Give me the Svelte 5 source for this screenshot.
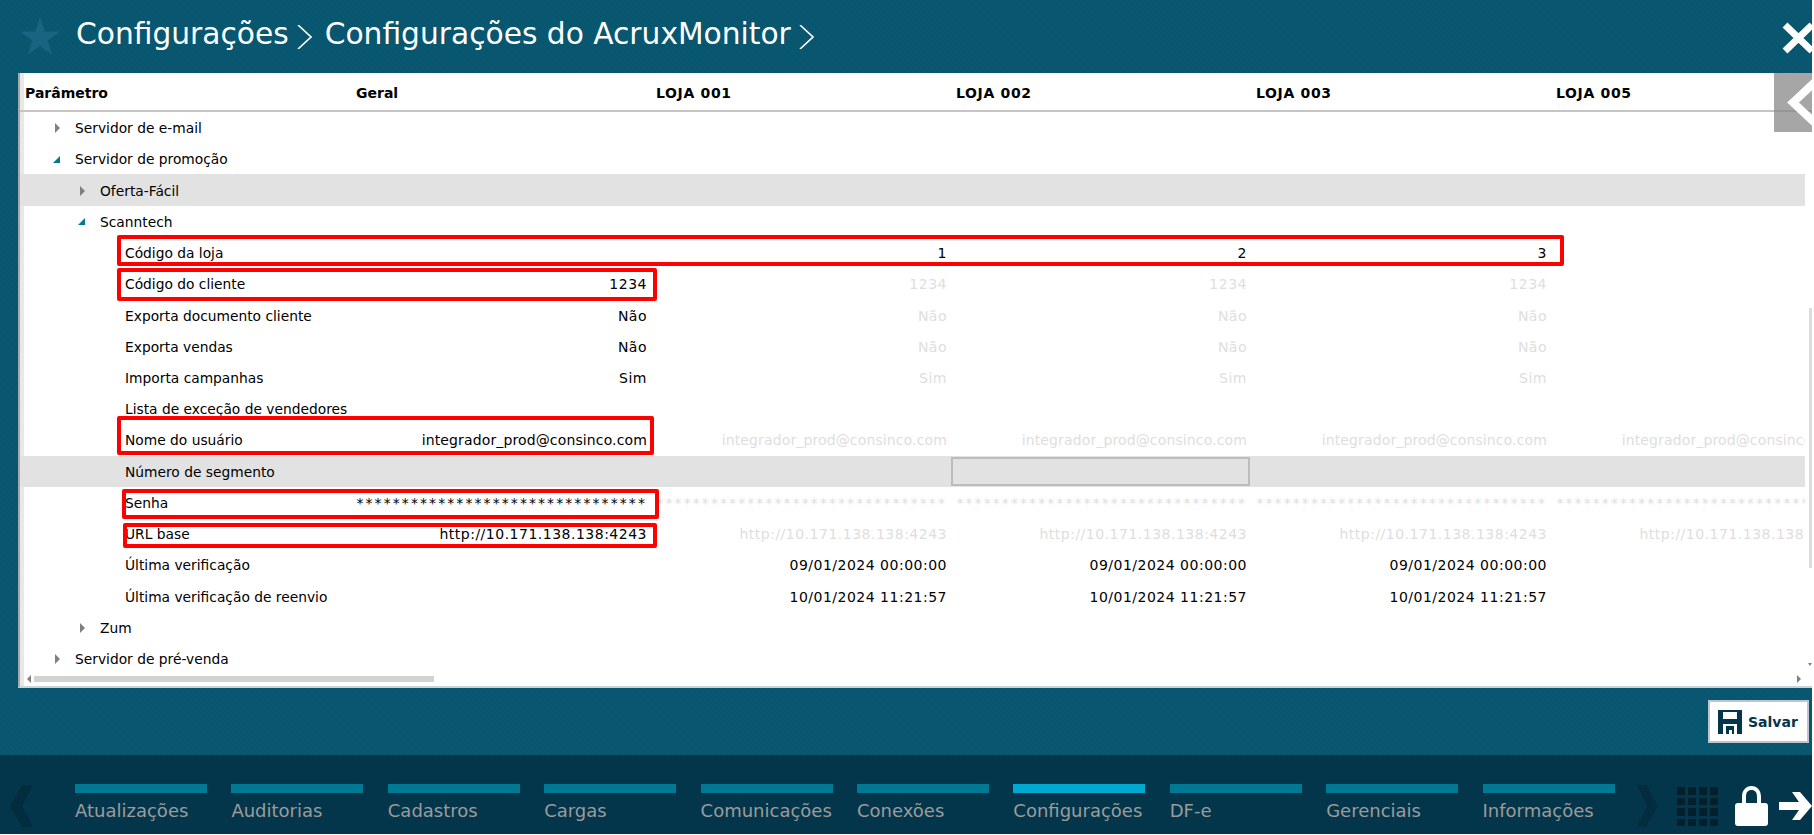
<script lang="ts">
	type Row = {
		label: string;
		level: number;
		arrow?: 'closed' | 'open';
		shaded?: boolean;
		values?: string[];
		inherited?: boolean;
		kind?: string;
	};

	const stars = '*'.repeat(32);
	const fill = (geral: string) => [geral, geral, geral, geral, geral];

	const columns = ['Geral', 'LOJA 001', 'LOJA 002', 'LOJA 003', 'LOJA 005'];

	const rows: Row[] = [
		{ label: 'Servidor de e-mail', level: 0, arrow: 'closed' },
		{ label: 'Servidor de promoção', level: 0, arrow: 'open' },
		{ label: 'Oferta-Fácil', level: 1, arrow: 'closed', shaded: true },
		{ label: 'Scanntech', level: 1, arrow: 'open' },
		{ label: 'Código da loja', level: 2, values: ['', '1', '2', '3', ''], kind: 'num' },
		{ label: 'Código do cliente', level: 2, values: ['1234', '1234', '1234', '1234', ''], inherited: true, kind: 'num' },
		{ label: 'Exporta documento cliente', level: 2, values: ['Não', 'Não', 'Não', 'Não', ''], inherited: true, kind: 'num' },
		{ label: 'Exporta vendas', level: 2, values: ['Não', 'Não', 'Não', 'Não', ''], inherited: true, kind: 'num' },
		{ label: 'Importa campanhas', level: 2, values: ['Sim', 'Sim', 'Sim', 'Sim', ''], inherited: true, kind: 'num' },
		{ label: 'Lista de exceção de vendedores', level: 2 },
		{ label: 'Nome do usuário', level: 2, values: fill('integrador_prod@consinco.com'), inherited: true, kind: 'mail' },
		{ label: 'Número de segmento', level: 2, shaded: true },
		{ label: 'Senha', level: 2, values: fill(stars), inherited: true, kind: 'stars' },
		{ label: 'URL base', level: 2, values: fill('http://10.171.138.138:4243'), inherited: true, kind: 'num' },
		{ label: 'Última verificação', level: 2, values: ['', '09/01/2024 00:00:00', '09/01/2024 00:00:00', '09/01/2024 00:00:00', ''], kind: 'num' },
		{ label: 'Última verificação de reenvio', level: 2, values: ['', '10/01/2024 11:21:57', '10/01/2024 11:21:57', '10/01/2024 11:21:57', ''], kind: 'num' },
		{ label: 'Zum', level: 1, arrow: 'closed' },
		{ label: 'Servidor de pré-venda', level: 0, arrow: 'closed' }
	];

	const tabs = [
		'Atualizações',
		'Auditorias',
		'Cadastros',
		'Cargas',
		'Comunicações',
		'Conexões',
		'Configurações',
		'DF-e',
		'Gerenciais',
		'Informações'
	];
</script>

<div class="page">
	<header class="top">
		<svg class="star" viewBox="0 0 40 38" aria-hidden="true">
			<path d="M20 0 24.700 14.500 40 14.500 27.600 23.500 32.400 38 20 29 7.600 38 12.400 23.500 0 14.500 15.300 14.500Z" />
		</svg>
		<h1>Configurações</h1>
		<svg class="crumb" viewBox="0 0 15 24" aria-hidden="true"><path d="M1 0 14 12 1 24" /></svg>
		<h1>Configurações do AcruxMonitor</h1>
		<svg class="crumb" viewBox="0 0 15 24" aria-hidden="true"><path d="M1 0 14 12 1 24" /></svg>
		<svg class="close" viewBox="0 0 30 32" aria-hidden="true"><path d="M3 3 30 29M30 3 3 29" /></svg>
	</header>

	<section class="panel">
		<div class="head">
			<span class="head-first">Parâmetro</span>
			{#each columns as col, i}
				<span class="head-cell" class:store={i > 0}>{col}</span>
			{/each}
		</div>

		<div class="body">
			{#each rows as row}
				<div class="row" class:shaded={row.shaded}>
					<div class="label level-{row.level}">
						{#if row.arrow}
							<i class="arrow {row.arrow}"></i>
						{/if}
						<span>{row.label}</span>
					</div>
					{#if row.values}
						{#each row.values as value, i}
							<span class="cell {row.kind}" class:faded={row.inherited && i > 0}>{value}</span>
						{/each}
					{/if}
					{#if row.label === 'Número de segmento'}
						<span class="cell"></span>
						<span class="cell"></span>
						<span class="cell focused"></span>
					{/if}
				</div>
			{/each}
		</div>

		<div class="hscroll">
			<i class="sb-left"></i>
			<div class="sb-thumb"></div>
			<i class="sb-right"></i>
		</div>

		<button class="side-back" aria-label="Recolher">
			<svg viewBox="0 0 38 59" aria-hidden="true"><path d="M43 7 19 29.500 43 52" /></svg>
		</button>
		<div class="vthumb"></div>
		<i class="sb-down"></i>

		<!-- marcações vermelhas do print -->
		<div class="mark m-loja"></div>
		<div class="mark m-cliente"></div>
		<div class="mark m-usuario"></div>
		<div class="mark m-senha"></div>
		<div class="mark m-url"></div>
	</section>

	<div class="actions">
		<button class="save">
			<svg viewBox="0 0 24 24" aria-hidden="true">
				<path fill-rule="evenodd" d="M0 0H24V24H19V14H5V24H0ZM5 2V9H19V2ZM8 16H16V24H8ZM11 20V24H14V20Z" />
			</svg>
			Salvar
		</button>
	</div>

	<footer class="bottom">
		<svg class="nav-chevron left" viewBox="0 0 23 42" aria-hidden="true"><path d="M23 0 12 0 0 21 12 42 23 42 12 21Z" /></svg>
		<nav class="tabs">
			{#each tabs as tab}
				<div class="tab" class:active={tab === 'Configurações'}>
					<div class="tab-bar"></div>
					<span>{tab}</span>
				</div>
			{/each}
		</nav>
		<svg class="nav-chevron right" viewBox="0 0 21 42" aria-hidden="true"><path d="M0 0 9 0 21 21 9 42 0 42 10 21Z" /></svg>
		<div class="grid-icon">
			{#each Array(16) as _}
				<i></i>
			{/each}
		</div>
		<svg class="lock" viewBox="0 0 33 40" aria-hidden="true">
			<path fill-rule="evenodd" d="M7 17V11C7 4 11 0 16.500 0S26 4 26 11V17H30Q33 17 33 20V37Q33 40 30 40H3Q0 40 0 37V20Q0 17 3 17ZM11 17H22V11C22 6 20 4 16.500 4S11 6 11 11Z" />
		</svg>
		<svg class="exit" viewBox="0 0 33 28" aria-hidden="true">
			<path d="M0 10H20L13 0H21L33 14 21 28H13L20 18H0Z" />
		</svg>
	</footer>
</div>

<style>
	:global(body) {
		margin: 0;
		background: #fff;
	}

	.page {
		position: relative;
		width: 1812px;
		height: 834px;
		display: flex;
		flex-direction: column;
		overflow: hidden;
		background-color: #07556f;
		background-image: repeating-linear-gradient(45deg, rgba(255, 255, 255, 0.012) 0 2px, transparent 2px 4px);
		font-family: 'DejaVu Sans', Verdana, sans-serif;
		color: #000;
	}

	.top {
		height: 73px;
		flex: none;
		display: flex;
		align-items: center;
		padding-left: 20px;
		color: #fff;
		box-sizing: border-box;
		position: relative;
	}

	.top h1 {
		margin: 0;
		font-size: 29.7px;
		font-weight: 400;
		white-space: nowrap;
		position: relative;
		top: -3px;
	}

	.star {
		width: 40px;
		height: 38px;
		margin: -1px 16px 0 0;
		fill: #176580;
	}

	.crumb {
		width: 15px;
		height: 24px;
		margin: 1px 13px 0 8px;
		fill: none;
		stroke: #fff;
		stroke-width: 1.6;
	}

	.close {
		position: absolute;
		right: 0;
		top: 22px;
		width: 30px;
		height: 32px;
		fill: none;
		stroke: #fff;
		stroke-width: 7;
	}

	.panel {
		position: relative;
		height: 615px;
		flex: none;
		margin-left: 18px;
		background: linear-gradient(90deg, #e8e8e8 4px, #fff 4px);
		border-left: 2px solid #a8a8a8;
		border-bottom: 2px solid #c9d4da;
		box-sizing: border-box;
		overflow: hidden;
	}

	.head {
		height: 39px;
		padding-top: 3px;
		display: grid;
		grid-template-columns: 327px repeat(5, 300px);
		align-items: center;
		border-bottom: 2px solid #c4c4c4;
		box-sizing: border-box;
		font-size: 14px;
		font-weight: 700;
	}

	.head-first {
		padding-left: 5px;
	}

	.head-cell {
		padding-left: 9px;
	}

	.head-cell.store {
		letter-spacing: 0.65px;
	}

	.body {
		width: 1785px;
		overflow: hidden;
	}

	.row {
		height: 31.24px;
		padding-top: 1px;
		box-sizing: border-box;
		display: grid;
		grid-template-columns: 327px repeat(5, 300px);
		align-items: center;
		font-size: 13.8px;
		white-space: nowrap;
	}

	.row.shaded {
		background: #e2e2e2;
	}

	.label {
		display: flex;
		align-items: center;
		position: relative;
	}

	.level-0 {
		padding-left: 55px;
	}

	.level-1 {
		padding-left: 80px;
	}

	.level-2 {
		padding-left: 105px;
	}

	.arrow {
		position: absolute;
		width: 0;
		height: 0;
		margin-left: -20px;
	}

	.arrow.closed {
		border-left: 5px solid #7f7f7f;
		border-top: 5px solid transparent;
		border-bottom: 5px solid transparent;
	}

	.arrow.open {
		margin-left: -22px;
		border-left: 7px solid transparent;
		border-bottom: 7px solid #007a94;
	}

	.cell {
		text-align: right;
		overflow: hidden;
		height: 18px;
		line-height: 18px;
		font-size: 14px;
	}

	.cell.num {
		letter-spacing: 0.5px;
	}

	.cell.mail {
		letter-spacing: 0.13px;
	}

	.cell.stars {
		letter-spacing: 2.08px;
	}

	.cell.faded {
		color: #dedede;
	}

	.cell.focused {
		height: 29px;
		box-sizing: border-box;
		margin: 0 -3px 0 4px;
		border: 2px solid #bcbcbc;
	}

	.hscroll {
		position: absolute;
		left: 0;
		right: 0;
		bottom: 2px;
		height: 10px;
		display: flex;
		align-items: center;
	}

	.sb-left {
		margin-left: 7px;
		width: 0;
		height: 0;
		border-right: 4px solid #808080;
		border-top: 4px solid transparent;
		border-bottom: 4px solid transparent;
	}

	.sb-thumb {
		width: 400px;
		height: 6px;
		margin-left: 3px;
		background: #d2d2d2;
	}

	.sb-right {
		margin-left: auto;
		margin-right: 11px;
		width: 0;
		height: 0;
		border-left: 4px solid #808080;
		border-top: 4px solid transparent;
		border-bottom: 4px solid transparent;
	}

	.side-back {
		position: absolute;
		top: 0;
		right: 0;
		width: 38px;
		height: 59px;
		padding: 0;
		border: none;
		background: rgba(136, 136, 136, 0.75);
	}

	.side-back svg {
		display: block;
		width: 38px;
		height: 59px;
		fill: none;
		stroke: #fff;
		stroke-width: 8;
	}

	.vthumb {
		position: absolute;
		top: 235px;
		right: 0;
		width: 3px;
		height: 260px;
		background: #dcdcdc;
	}

	.sb-down {
		position: absolute;
		top: 590px;
		right: 0;
		width: 0;
		height: 0;
		border-left: 2px solid transparent;
		border-right: 2px solid transparent;
		border-top: 3px solid #808080;
	}

	.mark {
		position: absolute;
		border: 4px solid #f00;
		border-radius: 2px;
		box-sizing: border-box;
	}

	.m-loja {
		left: 97px;
		top: 162px;
		width: 1447px;
		height: 31px;
	}

	.m-cliente {
		left: 97px;
		top: 195px;
		width: 540px;
		height: 33px;
	}

	.m-usuario {
		left: 97px;
		top: 343px;
		width: 537px;
		height: 39px;
	}

	.m-senha {
		left: 102px;
		top: 416px;
		width: 537px;
		height: 30px;
	}

	.m-url {
		left: 103px;
		top: 450px;
		width: 534px;
		height: 25px;
	}

	.actions {
		flex: 1;
		display: flex;
		align-items: flex-start;
		justify-content: flex-end;
		padding: 12px 3px 0 0;
	}

	.save {
		width: 101px;
		height: 43px;
		display: flex;
		align-items: center;
		gap: 6px;
		padding: 0 0 0 8px;
		background: #fff;
		border: 2px solid #bcc6cc;
		font-family: inherit;
		font-size: 14px;
		font-weight: 700;
		color: #04364b;
		box-sizing: border-box;
	}

	.save svg {
		width: 24px;
		height: 24px;
		flex: none;
		fill: #04364b;
	}

	.bottom {
		height: 79px;
		flex: none;
		display: flex;
		align-items: flex-start;
		background: #04364b;
		position: relative;
	}

	.nav-chevron {
		fill: #032c3e;
		flex: none;
		margin-top: 30px;
	}

	.nav-chevron.left {
		width: 23px;
		height: 42px;
		margin-left: 10px;
	}

	.nav-chevron.right {
		width: 21px;
		height: 42px;
		margin-left: 22.4px;
		margin-right: 19px;
	}

	.tabs {
		display: flex;
		gap: 24.4px;
		margin: 29px 0 0 42px;
	}

	.tab {
		width: 132px;
		display: flex;
		flex-direction: column;
		font-size: 18px;
		color: #9b9b9b;
		white-space: nowrap;
	}

	.tab-bar {
		height: 9px;
		margin-bottom: 7px;
		background: #007a94;
	}

	.tab.active .tab-bar {
		background: #00a9cf;
	}

	.grid-icon {
		width: 41px;
		height: 39px;
		margin-top: 32px;
		flex: none;
		display: grid;
		grid-template-columns: repeat(4, 1fr);
		grid-template-rows: repeat(4, 1fr);
		gap: 3px;
	}

	.grid-icon i {
		background: #021f2c;
	}

	.lock {
		width: 33px;
		height: 40px;
		margin: 31px 0 0 17px;
		fill: #fff;
		flex: none;
	}

	.exit {
		width: 33px;
		height: 28px;
		margin: 37px 0 0 11px;
		fill: #fff;
		flex: none;
	}
</style>
